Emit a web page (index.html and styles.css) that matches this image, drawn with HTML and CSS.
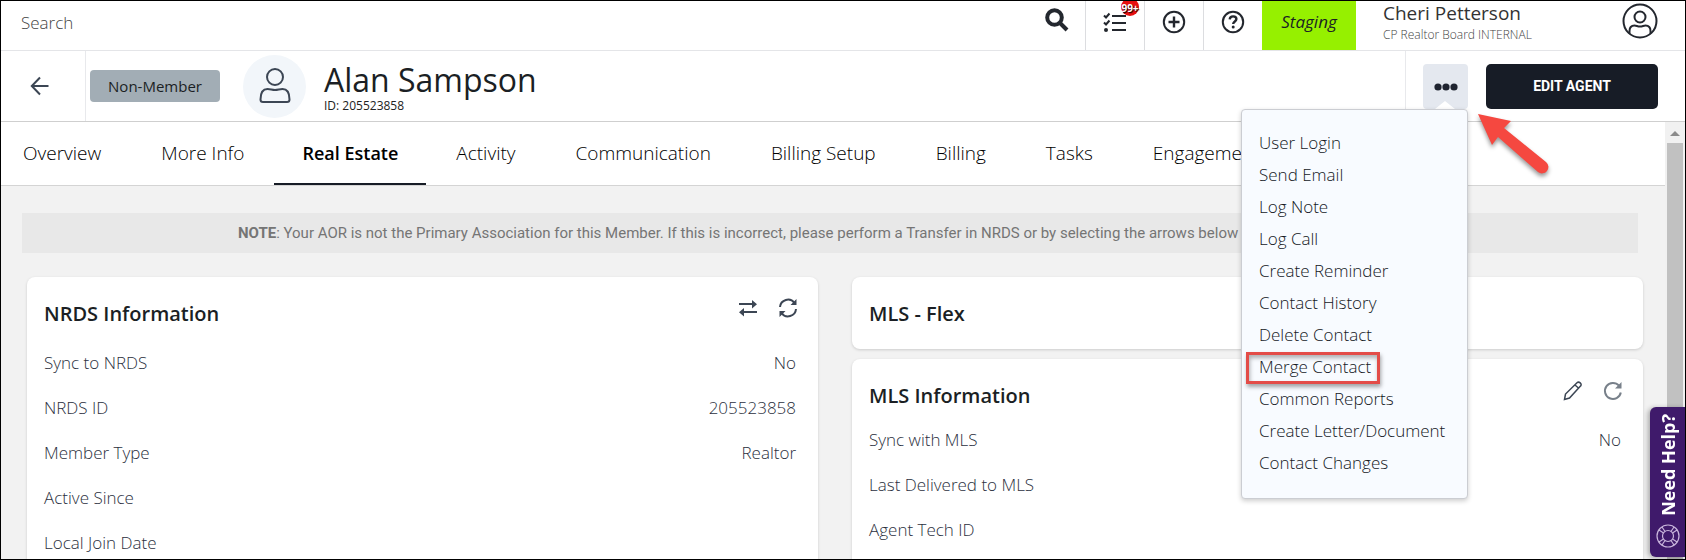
FILE: index.html
```html
<!DOCTYPE html>
<html lang="en">
<head>
<meta charset="utf-8">
<title>Alan Sampson</title>
<meta name="viewport" content="width=device-width, initial-scale=1">
<link rel="stylesheet" href="styles.css">
</head>
<body>
<div class="app">
  <header class="topbar">
    <input class="search" type="text" placeholder="Search" aria-label="Search">
    <button class="tool tool-search" aria-label="Run search"><svg width="24" height="24" viewBox="0 0 24 24" fill="none" stroke="#23272e" stroke-width="4"><circle cx="9.5" cy="9.5" r="7.3"/><path d="M15 15l7 7"/></svg></button>
    <button class="tool" aria-label="Tasks"><svg width="24" height="24" viewBox="0 0 24 24" fill="none" stroke="#23272e" stroke-width="2"><path d="M9 6h14M9 13h14M9 20h14M1 5.500l2 2 3.500-4M1 12.500l2 2 3.500-4"/><circle cx="3" cy="20" r="2" fill="#23272e" stroke="none"/></svg><span class="count">99+</span></button>
    <button class="tool" aria-label="Add"><svg width="24" height="24" viewBox="0 0 24 24" fill="none" stroke="#23272e" stroke-width="2"><circle cx="12" cy="12" r="10.200"/><path d="M12 6.500v11M6.500 12h11" stroke-width="2.400"/></svg></button>
    <button class="tool" aria-label="Help"><svg width="24" height="24" viewBox="0 0 24 24" fill="none" stroke="#23272e" stroke-width="2"><circle cx="12" cy="12" r="10.200"/><path d="M8.700 9.400c.2-2 1.600-3 3.400-3 1.900 0 3.300 1.100 3.300 2.700 0 2.300-3.200 2.400-3.200 4.900" stroke-width="2.400"/><circle cx="12.200" cy="17" r="1.500" fill="#23272e" stroke="none"/></svg></button>
    <div class="env">Staging</div>
    <div class="user">
      <div class="user-name">Cheri Petterson</div>
      <div class="user-org">CP Realtor Board INTERNAL</div>
    </div>
    <button class="profile" aria-label="Profile"><svg width="36" height="36" viewBox="0 0 36 36" fill="none" stroke="#23272e" stroke-width="2"><circle cx="18" cy="18" r="16.500"/><circle cx="18" cy="14" r="5.500"/><path d="M7.500 30.500v-2.500c0-3.500 2-5.500 5-5.500 2 0 3 1 5.500 1s3.500-1 5.500-1c3 0 5 2 5 5.500v2.500"/></svg></button>
  </header>

  <div class="headbar">
    <button class="back" aria-label="Back"><svg width="20" height="20" viewBox="0 0 20 20" fill="none" stroke="#3c4654" stroke-width="2"><path d="M18.500 10H2M10 1.500L1.800 10l8.200 8.500"/></svg></button>
    <span class="status">Non-Member</span>
    <span class="avatar"><svg width="32" height="38" viewBox="0 0 32 38" fill="none" stroke="#3c4654" stroke-width="2"><circle cx="16" cy="10" r="8"/><path d="M1.500 32.500c0-7 2-10.500 7-10.500 3 0 4.500 1 7.500 1s4.500-1 7.500-1c5 0 7 3.500 7 10.500 0 1.500-1 2.500-2.500 2.500H4c-1.500 0-2.500-1-2.500-2.500z"/></svg></span>
    <div class="person">
      <h1 class="person-name">Alan Sampson</h1>
      <div class="person-id">ID: 205523858</div>
    </div>
    <div class="actions">
      <div class="more-wrap">
        <button class="more" aria-label="More actions" aria-expanded="true"><svg width="24" height="8" viewBox="0 0 24 8" fill="#1f2430"><circle cx="4" cy="4" r="3.600"/><circle cx="12" cy="4" r="3.600"/><circle cx="20" cy="4" r="3.600"/></svg></button>
        <span class="caret"></span>
        <nav class="menu">
          <a href="#">User Login</a>
          <a href="#">Send Email</a>
          <a href="#">Log Note</a>
          <a href="#">Log Call</a>
          <a href="#">Create Reminder</a>
          <a href="#">Contact History</a>
          <a href="#">Delete Contact</a>
          <a href="#" class="marked">Merge Contact</a>
          <a href="#">Common Reports</a>
          <a href="#">Create Letter/Document</a>
          <a href="#">Contact Changes</a>
        </nav>
        <svg class="pointer" width="84" height="76" viewBox="0 0 84 76"><path d="M5 5l33 7-7 7 42 34a5 5 0 0 1-8 10L25 28l-6 8z" fill="#f54840"/></svg>
      </div>
      <button class="edit">EDIT AGENT</button>
    </div>
  </div>

  <div class="body">
    <main class="main">
      <nav class="tabs">
        <a href="#">Overview</a>
        <a href="#">More Info</a>
        <a href="#" class="active">Real Estate</a>
        <a href="#">Activity</a>
        <a href="#">Communication</a>
        <a href="#">Billing Setup</a>
        <a href="#">Billing</a>
        <a href="#">Tasks</a>
        <a href="#">Engagement</a>
      </nav>
      <p class="notice"><b>NOTE</b>: Your AOR is not the Primary Association for this Member. If this is incorrect, please perform a Transfer in NRDS or by selecting the arrows below</p>
      <div class="columns">
        <section class="card">
          <div class="card-head">
            <h2>NRDS Information</h2>
            <button class="icon" aria-label="Transfer"><svg width="20" height="20" viewBox="0 0 20 20" fill="#3c4654"><path d="M1 5h13V2l5 4.200-5 4.200V7H1zM19 13H6v-3l-5 4.200 5 4.200V15h13z"/></svg></button>
            <button class="icon" aria-label="Sync"><svg width="20" height="20" viewBox="0 0 20 20" fill="none" stroke="#3c4654" stroke-width="2"><path d="M2 9a8 8 0 0 1 14.500-4M18 11a8 8 0 0 1-14.500 4"/><path d="M18.500 1v6h-6zM1.500 19v-6h6z" fill="#3c4654" stroke="none"/></svg></button>
          </div>
          <dl class="fields">
            <div><dt>Sync to NRDS</dt><dd>No</dd></div>
            <div><dt>NRDS ID</dt><dd>205523858</dd></div>
            <div><dt>Member Type</dt><dd>Realtor</dd></div>
            <div><dt>Active Since</dt><dd></dd></div>
            <div><dt>Local Join Date</dt><dd></dd></div>
          </dl>
        </section>
        <div class="stack">
          <section class="card"><div class="card-head"><h2>MLS - Flex</h2></div></section>
          <section class="card card-fill">
            <div class="card-head">
              <h2>MLS Information</h2>
              <button class="icon" aria-label="Edit"><svg width="20" height="20" viewBox="0 0 20 20" fill="none" stroke="#3c4654" stroke-width="1.500"><path d="M1.500 18.500l1-5.500L14 1.800c1-1 2.200-.8 3.200.1s1.300 2.200.3 3.200L6.500 17zM12 4l4 3.500"/></svg></button>
              <button class="icon" aria-label="Refresh"><svg width="20" height="20" viewBox="0 0 20 20" fill="none" stroke="#78808a" stroke-width="2"><path d="M17.800 11.500A8 8 0 1 1 16 4.700"/><path d="M18.500 1v6.500H12z" fill="#78808a" stroke="none"/></svg></button>
            </div>
            <dl class="fields">
              <div><dt>Sync with MLS</dt><dd>No</dd></div>
              <div><dt>Last Delivered to MLS</dt><dd></dd></div>
              <div><dt>Agent Tech ID</dt><dd></dd></div>
            </dl>
          </section>
        </div>
      </div>
    </main>
    <div class="scrollbar"><span class="scroll-up"></span><span class="scroll-thumb"></span></div>
  </div>

  <button class="help">
    <svg width="24" height="24" viewBox="0 0 24 24" fill="none" stroke="#c9b6dc" stroke-width="1.200"><circle cx="12" cy="12" r="11"/><circle cx="12" cy="12" r="5.500"/><path d="M3 6l4.500 3M6 3l3 4.500M21 6l-4.500 3M18 3l-3 4.500M3 18l4.500-3M6 21l3-4.500M21 18l-4.500-3M18 21l-3-4.500"/></svg>
    <span>Need Help?</span>
  </button>
</div>
</body>
</html>
```

FILE: styles.css
```css
*, *::after { box-sizing: border-box; }

body {
  margin: 0;
  font-family: "Open Sans", "Noto Sans", sans-serif;
  font-size: 16px;
  color: #1b1f24;
}

button { border: 0; background: none; padding: 0; font: inherit; color: inherit; }
a { color: inherit; text-decoration: none; }

.app {
  position: relative;
  height: 100vh;
  overflow: hidden;
  display: flex;
  flex-direction: column;
  border: 1px solid #000;
  background: #fff;
}

/* Top bar */
.topbar {
  display: flex;
  flex: none;
  height: 50px;
  border-bottom: 1px solid #e4e5e8;
}
.search {
  flex: 1;
  min-width: 0;
  border: 0;
  outline: 0;
  padding: 0 20px 6px;
  font: inherit;
  font-size: 17px;
  font-weight: 300;
}
.search::placeholder { color: #444; opacity: 1; }
.tool {
  position: relative;
  width: 59px;
  display: flex;
  justify-content: center;
  padding-top: 9px;
  border-left: 1px solid #dcdde0;
}
.tool-search { border-left: 0; padding-top: 7px; padding-left: 3px; }
.count {
  position: absolute;
  top: -3px;
  left: 35px;
  width: 18px;
  height: 18px;
  border-radius: 50%;
  background: #e60f0f;
  color: #fff;
  font-size: 10px;
  font-weight: 700;
  line-height: 20px;
  text-shadow: 1px 1px 1px #000;
}
.env {
  width: 94px;
  padding-top: 9px;
  background: #96f000;
  font-size: 17px;
  font-style: italic;
  font-weight: 500;
  line-height: 24px;
  text-align: center;
}
.user { width: 266px; padding-left: 27px; }
.user-name { font-size: 19px; line-height: 24px; color: #333; }
.user-org { font-size: 12px; font-weight: 300; line-height: 20px; color: #444; }
.profile { width: 36px; margin-right: 27px; padding-top: 2px; display: flex; }

/* Record header */
.headbar {
  position: relative;
  z-index: 2;
  flex: none;
  display: flex;
  align-items: center;
  height: 71px;
  border-bottom: 1px solid #cfcfcf;
}
.back {
  align-self: stretch;
  width: 85px;
  display: flex;
  align-items: center;
  padding-left: 29px;
  border-right: 1px solid #e8e9ec;
}
.status {
  margin-left: 4px;
  width: 130px;
  border-radius: 4px;
  background: #a2adb5;
  line-height: 32px;
  font-size: 15px;
  text-align: center;
}
.avatar {
  margin-left: 23px;
  width: 63px;
  height: 63px;
  border-radius: 50%;
  background: #f2f6fa;
  display: flex;
  align-items: center;
  justify-content: center;
}
.person { margin-left: 18px; }
.person-name { margin: 0; font-size: 32px; font-weight: 400; line-height: 40px; }
.person-id { font-size: 12px; line-height: 12px; color: #222; }
.actions {
  align-self: stretch;
  display: flex;
  gap: 18px;
  margin-left: auto;
  padding: 13px 27px 12px 17px;
  border-left: 1px solid #e8e9ec;
}
.more-wrap { position: relative; display: flex; }
.more {
  width: 45px;
  border-radius: 4px;
  background: #e4e8ef;
  display: flex;
  align-items: center;
  justify-content: center;
}
.caret {
  position: absolute;
  left: 12px;
  bottom: 0;
  border: 10px solid transparent;
  border-top: 0;
  border-bottom: 8px solid #fff;
}
.edit {
  width: 172px;
  padding-bottom: 2px;
  border-radius: 5px;
  background: #171c26;
  color: #fff;
  font-family: Roboto, sans-serif;
  font-size: 14px;
  font-weight: 700;
}
.menu {
  position: absolute;
  top: 100%;
  right: 0;
  width: 227px;
  padding: 17px 17px 19px;
  border: 1px solid #cbcdd2;
  border-radius: 4px;
  background: #f8fbff;
  box-shadow: 0 2px 5px rgba(0, 0, 0, .2);
  font-size: 17px;
  font-weight: 300;
}
.menu a { display: block; position: relative; line-height: 32px; white-space: nowrap; color: #14181e; }
.marked::after {
  content: "";
  position: absolute;
  top: 1px;
  left: -13px;
  width: 134px;
  height: 32px;
  border: 3px solid #e34c48;
  box-shadow: 1px 3px 4px rgba(0, 0, 0, .35), inset 1px 3px 4px rgba(0, 0, 0, .3);
}
.pointer {
  position: absolute;
  left: 50px;
  top: 45px;
  filter: drop-shadow(0 3px 2px rgba(0, 0, 0, .4));
}

/* Content */
.body { flex: 1; min-height: 0; display: flex; background: #f2f2f2; }
.main { flex: 1; min-width: 0; overflow: hidden; display: flex; flex-direction: column; }
.tabs {
  flex: none;
  display: flex;
  height: 64px;
  padding-right: 28px;
  background: #fff;
  border-bottom: 1px solid #d4d4d4;
  font-size: 19px;
  font-weight: 300;
  color: #000;
}
.tabs a { padding: 0 30px; line-height: 62px; white-space: nowrap; }
.tabs a:first-child { padding-left: 22px; }
.tabs .active { padding: 0 28px; font-size: 18px; font-weight: 600; border-bottom: 2px solid #171c26; }
.notice {
  flex: none;
  margin: 27px 27px 24px 21px;
  padding-left: 216px;
  background: #e8e8e8;
  color: #757575;
  font-family: Roboto, sans-serif;
  font-size: 15px;
  line-height: 40px;
  white-space: nowrap;
}
.columns {
  flex: 1;
  display: grid;
  grid-template-columns: 1fr 1fr;
  gap: 34px;
  padding: 0 22px 0 26px;
}
.stack { display: flex; flex-direction: column; gap: 10px; }
.card {
  padding: 0 20px 0 17px;
  border-radius: 8px;
  background: #fff;
  box-shadow: 0 1px 3px rgba(0, 0, 0, .16);
}
.card-fill { flex: 1; }
.card-head { display: flex; align-items: center; gap: 20px; height: 72px; }
.card h2 { flex: 1; margin: 0; font-size: 20px; font-weight: 600; }
.icon { display: flex; padding-bottom: 10px; }
.fields { margin: 0; padding: 2px 2px 0 0; }
.card-fill .fields { padding-top: 0; }
.card-fill .card-head { height: 69px; padding-top: 4px; }
.fields > div {
  display: flex;
  justify-content: space-between;
  height: 45px;
  line-height: 24px;
  font-size: 17px;
  font-weight: 300;
  color: #2b3040;
}
.fields dd { margin: 0; }

/* Scroll track */
.scrollbar { width: 20px; padding: 0 2px; display: flex; flex-direction: column; background: #f1f1f1; }
.scroll-up {
  margin: 9px auto 7px;
  border: 5px solid transparent;
  border-top: 0;
  border-bottom-color: #8b8b8b;
}
.scroll-thumb { flex: 1; background: #c1c1c1; }

/* Help tab */
.help {
  position: absolute;
  right: 0;
  bottom: 2px;
  z-index: 3;
  width: 35px;
  height: 150px;
  display: flex;
  flex-direction: column-reverse;
  align-items: center;
  justify-content: space-between;
  padding: 7px 0 9px;
  border-radius: 6px 0 0 6px;
  background: #3f1a6b;
  color: #fff;
  font-weight: 700;
  font-size: 18px;
  box-shadow: -2px 1px 5px rgba(0, 0, 0, .3);
}
.help svg { order: -1; }
.help span { writing-mode: vertical-rl; transform: rotate(180deg); line-height: 24px; }
```
